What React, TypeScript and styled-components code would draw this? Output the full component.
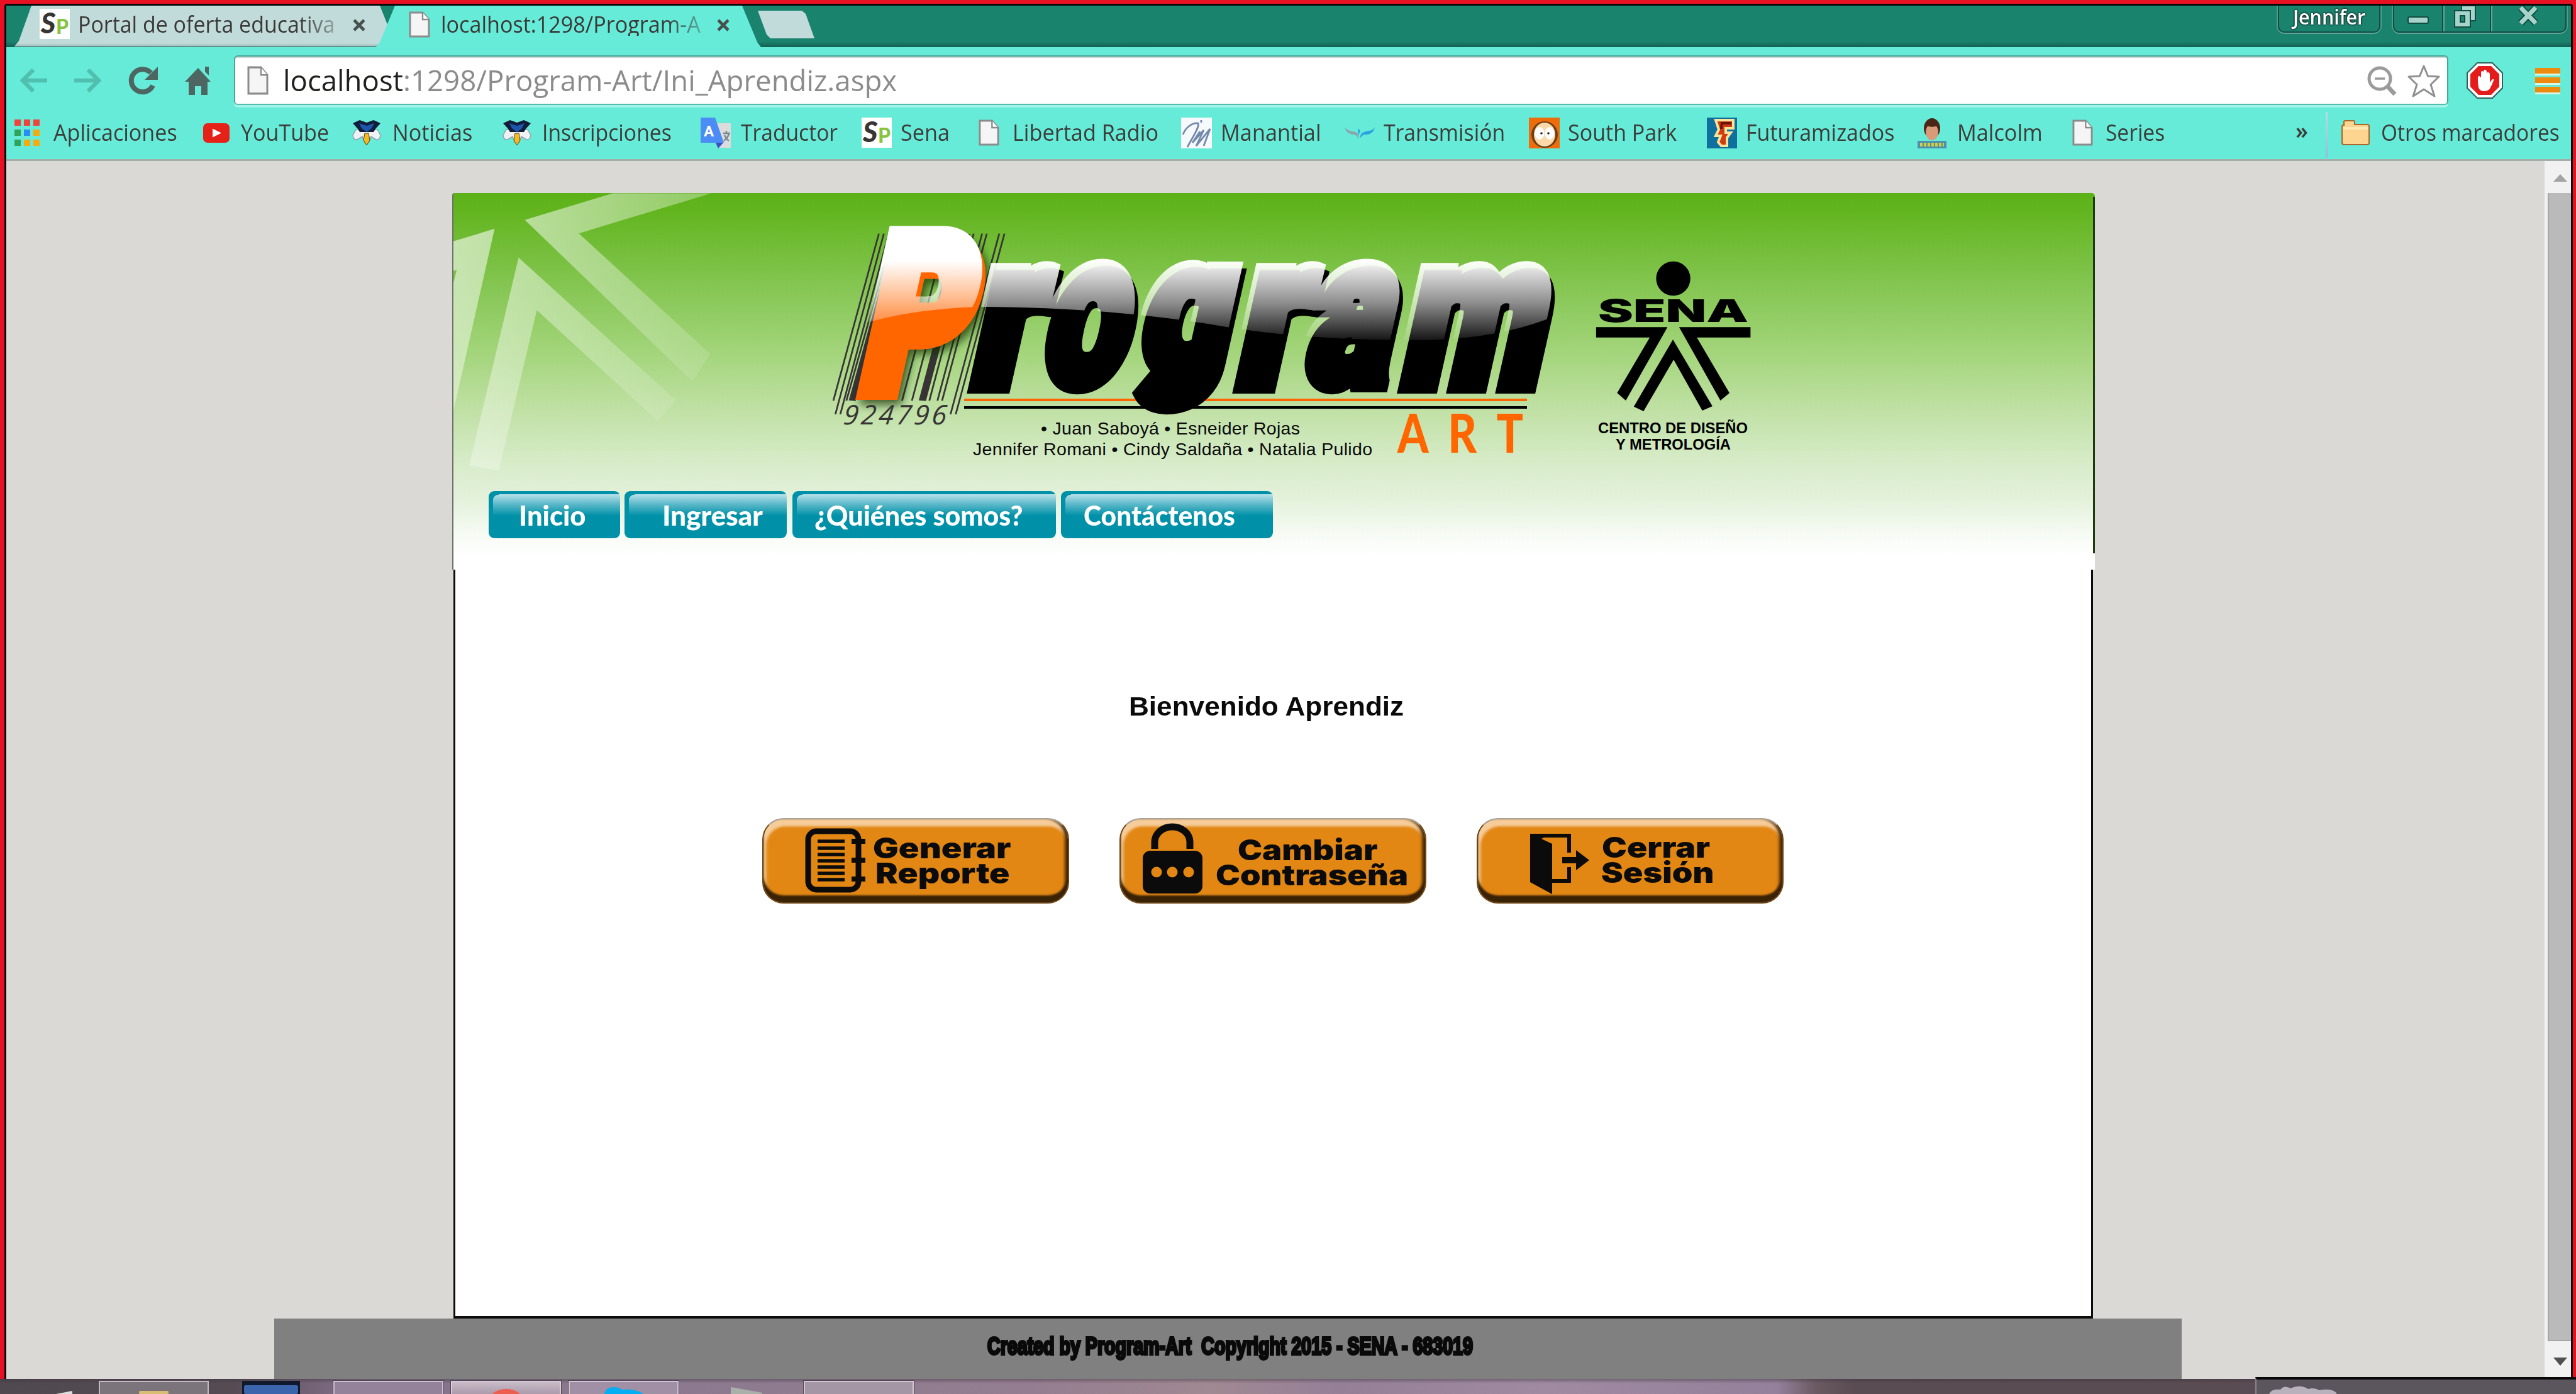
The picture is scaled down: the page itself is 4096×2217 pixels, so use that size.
import React, { useLayoutEffect, useRef, useState } from "react";
import styled, { createGlobalStyle, css } from "styled-components";

const ui = `"Open Sans", "Noto Sans", sans-serif`;
const teal = "#66ebd9";
const ink = "#3c3c38";

const GlobalStyle = createGlobalStyle`
  * { box-sizing: border-box; }
  html, body { margin: 0; background: #dbd9d5; overflow: hidden; }
  svg { display: block; flex: none; overflow: visible; }
`;

/* ---------- text that is condensed or widened to a given width ---------- */

const FitBox = styled.span<{ $w: number }>`
  display: block;
  flex: none;
  width: ${(p) => p.$w}px;
  white-space: pre;
`;
const FitInner = styled.span`
  display: inline-block;
  vertical-align: top;
  transform-origin: 0 50%;
`;
function Fit({ w, children }: { w: number; children: React.ReactNode }) {
  const ref = useRef<HTMLSpanElement>(null);
  const [scale, setScale] = useState(1);
  useLayoutEffect(() => {
    if (ref.current) setScale(w / ref.current.offsetWidth);
  }, [w]);
  return (
    <FitBox $w={w}>
      <FitInner ref={ref} style={{ transform: `scaleX(${scale})` }}>
        {children}
      </FitInner>
    </FitBox>
  );
}

/* ---------- window ---------- */

const Window = styled.div`
  width: 4096px;
  height: 2217px;
  display: flex;
  flex-direction: column;
  background: #e81123;
  overflow: hidden;
`;
const Frame = styled.div`
  margin: 6px 5px 0 7px;
  border: solid #0a0a0a;
  border-width: 3px 3px 0 3px;
  height: 2187px;
  flex: none;
  display: flex;
  flex-direction: column;
  border-radius: 4px 4px 0 0;
  overflow: hidden;
`;

/* ---------- tab strip ---------- */

const TabStrip = styled.div`
  height: 66px;
  flex: none;
  display: flex;
  justify-content: space-between;
  background: linear-gradient(#1a836e 86%, #125f52);
`;
const Tabs = styled.div`
  display: flex;
`;
const Tab = styled.div<{ $active?: boolean }>`
  width: ${(p) => (p.$active ? 612 : 602)}px;
  margin-left: ${(p) => (p.$active ? -26 : 12)}px;
  height: ${(p) => (p.$active ? 66 : 65)}px;
  padding: 5px 0 0 ${(p) => (p.$active ? 52 : 41)}px;
  display: flex;
  align-items: flex-start;
  background: ${(p) => (p.$active ? teal : "linear-gradient(#c1dbdb 92%, #9fb9b7)")};
  clip-path: ${(p) =>
    p.$active
      ? "polygon(30px 0, 582px 0, 606px 58px, 612px 66px, 0 66px, 6px 58px)"
      : "polygon(28px 0, 582px 0, 602px 50px, 576px 66px, 0 66px, 8px 56px)"};
  font: 36px/1 ${ui};
  color: #3a3936;
`;
const TabTitle = styled.div<{ $ml: number }>`
  margin: 7px 0 0 ${(p) => p.$ml}px;
  mask-image: linear-gradient(90deg, #000 86%, rgba(0, 0, 0, 0.35));
`;
const CloseMark = styled.svg<{ $ml: number }>`
  margin: 16px 0 0 ${(p) => p.$ml}px;
`;
const NewTab = styled.div`
  width: 90px;
  height: 44px;
  margin: 8px 0 0 -5px;
  background: #c1dbdb;
  clip-path: polygon(0 0, 70px 0, 76px 5px, 90px 44px, 20px 44px, 14px 38px);
`;
const Controls = styled.div`
  display: flex;
  gap: 20px;
  margin-right: 7px;
`;
const glassEdge = css`
  height: 43px;
  border: solid #0f4c41;
  border-width: 0 2px 2px 2px;
  border-radius: 0 0 10px 10px;
  box-shadow: 0 2px 0 #5fa898, -2px 0 0 #4f9c8c, 2px 0 0 #4f9c8c;
`;
const UserBadge = styled.div`
  ${glassEdge}
  width: 163px;
  padding: 1px 0 0 22px;
  font: 600 33px/1 ${ui};
  color: #fff;
  text-shadow: 0 0 3px #111, 0 0 3px #111;
`;
const WindowButtons = styled.div`
  ${glassEdge}
  width: 276px;
  display: flex;
`;
const WindowButton = styled.div<{ $w: number }>`
  width: ${(p) => p.$w}px;
  display: flex;
  justify-content: center;
  & + & {
    border-left: 2px solid #0f4c41;
    box-shadow: inset 2px 0 0 #5fa898;
  }
`;

/* ---------- toolbar ---------- */

const Toolbar = styled.div`
  height: 103px;
  flex: none;
  display: flex;
  align-items: flex-start;
  padding: 13px 16px 0 20px;
  background: ${teal};
`;
const ToolIcon = styled.svg<{ $ml?: number; $mt?: number }>`
  margin: ${(p) => p.$mt ?? 17}px 0 0 ${(p) => p.$ml ?? 0}px;
`;
const Omnibox = styled.div`
  width: 3521px;
  height: 79px;
  margin-left: 36px;
  padding: 15px 10px 0 19px;
  display: flex;
  align-items: flex-start;
  background: #fff;
  border: 2px solid #4aa596;
  border-bottom-color: #4fbfae;
  border-radius: 6px;
  box-shadow: 0 4px 0 #a3f3e8, inset 0 2px 1px #c9d6d4;
`;
const Url = styled.div`
  margin: 0 auto 0 23px;
  font: 45.5px/1 ${ui};
  color: #8b8b8b;
  b { font-weight: 400; color: #22201e; }
`;

/* ---------- bookmarks ---------- */

const Bookmarks = styled.div`
  height: 78px;
  flex: none;
  display: flex;
  background: ${teal};
  border-bottom: 3px solid #a2aeaa;
  font: 36px/1 ${ui};
  color: ${ink};
`;
const Bookmark = styled.div<{ $ml: number; $gap: number }>`
  display: flex;
  align-items: center;
  height: 66px;
  margin-left: ${(p) => p.$ml}px;
  gap: ${(p) => p.$gap}px;
`;
const More = styled.div`
  width: 22px;
  margin: 12px 26px 0 auto;
  font: 600 36px/1 ${ui};
`;
const Divider = styled.div`
  width: 3px;
  height: 73px;
  background: linear-gradient(#b8dfe0, #9db6dc);
`;
const OtherBookmarks = styled(Bookmark)`
  margin-right: 18px;
`;

/* ---------- page ---------- */

const Viewport = styled.div`
  flex: 1;
  min-height: 0;
  display: flex;
  background: #dbd9d5;
`;
const Page = styled.div`
  width: 4036px;
  flex: none;
  padding-top: 51px;
`;
const Header = styled.header`
  width: 2612px;
  height: 599px;
  margin-left: 709px;
  display: flex;
  flex-direction: column;
  border-left: 2px solid #6d706b;
  border-radius: 4px 5px 0 0;
  background:
    linear-gradient(#1d3a0c, #1d3a0c) 100% 6px / 3px 567px no-repeat,
    linear-gradient(#5bb118 0, #63b520 5%, #85c653 25%, #a6d67f 44%, #bfe0a3 57%, #d8ecca 72%, #e3f1da 81%, #f5faf2 90%, #fff 96%);
`;
const Nav = styled.nav`
  display: flex;
  margin-left: 56px;
`;
const NavButton = styled.a<{ $w: number; $pl: number; $mr: number }>`
  width: ${(p) => p.$w}px;
  height: 75px;
  margin-right: ${(p) => p.$mr}px;
  padding: 16px 0 0 ${(p) => p.$pl}px;
  border-radius: 9px;
  background:
    radial-gradient(circle at 100% 100%, transparent 9px, #0091a8 9.5px) 6px 5px / 10px 10px no-repeat,
    linear-gradient(#b8e1e9, #5fbaca 45%, #0091a8) 7px 5px / 100% 34px no-repeat,
    #0091a8;
  font: 900 44px/1 Lato, sans-serif;
  color: #fff;
`;
const Body = styled.main`
  width: 2607px;
  height: 1191px;
  margin-left: 711px;
  background: #fff;
  border: solid #0c0c0c;
  border-width: 0 3px 4px 3px;
`;
const Welcome = styled.h1`
  margin: 0 0 0 1071px;
  padding-top: 197px;
  font: 700 42px/1 "Liberation Sans", Arial, sans-serif;
  color: #0a0a0a;
`;
const Actions = styled.div`
  display: flex;
  gap: 80px;
  margin: 156px 0 0 488px;
`;
const ActionButton = styled.button<{ $pl: number }>`
  width: 488px;
  height: 136px;
  padding: 0 0 0 ${(p) => p.$pl}px;
  display: flex;
  align-items: flex-start;
  border: 2px solid #6b4414;
  border-top-color: #a8a19a;
  border-radius: 34px;
  background: #e28714;
  box-shadow: inset 0 -11px 3px #3a2206, inset -5px -2px 4px #4a2b08, inset 4px 10px 4px #f5cc9a, inset 0 10px 4px #f5cc9a;
  color: #0b0b0b;
  text-align: left;
`;
const ActionText = styled.div<{ $ml: number; $mt: number; $indent: number }>`
  margin: ${(p) => p.$mt}px 0 0 ${(p) => p.$ml}px;
  display: grid;
  font: 900 45px/40px Inter, sans-serif;
  & > :first-child { margin-left: ${(p) => p.$indent}px; }
`;
const Footer = styled.footer`
  width: 3033px;
  height: 97px;
  margin-left: 426px;
  padding: 24px 0 0 1134px;
  background: #808080;
  font: 700 39px/1 "Liberation Sans Narrow", "Liberation Sans", sans-serif;
  -webkit-text-stroke: 4px #0a0a0a;
  color: #0a0a0a;
`;
const Scrollbar = styled.div`
  flex: 1;
  display: flex;
  flex-direction: column;
  align-items: flex-end;
  background: #f1f1f1;
`;
const Thumb = styled.div`
  width: 37px;
  height: 1826px;
  background: #bababa;
  border-left: 2px solid #a5a5a5;
  border-bottom: 2px solid #a5a5a5;
`;
const ScrollArrow = styled.svg<{ $mt: number; $mb: number }>`
  margin: ${(p) => p.$mt}px 6px ${(p) => p.$mb}px 0;
`;

/* ---------- taskbar ---------- */

const Taskbar = styled.div`
  height: 24px;
  flex: none;
  display: flex;
  align-items: flex-end;
  padding-left: 9px;
  background:
    linear-gradient(rgba(60, 50, 60, 0.45), transparent 7px),
    linear-gradient(90deg, #504950 0, #554b53 9%, #6a5b6b 11%, #85718a 14%, #8f7b90 30%, #947d90 40%, #a08992 47%, #957f97 52%, #a08aa2 60%, #94809a 69%, #6a5a62 70.5%, #5a4c53 72%, #5a4c53);
`;
const Task = styled.div<{ $ml: number; $bg: string; $w?: number; $bare?: boolean }>`
  width: ${(p) => p.$w ?? 175}px;
  height: 21px;
  margin-left: ${(p) => p.$ml}px;
  display: flex;
  align-items: flex-end;
  justify-content: center;
  background: ${(p) => p.$bg};
  ${(p) => !p.$bare && css`
    border: 2px solid rgba(235, 225, 235, 0.65);
    border-bottom: 0;
    outline: 1px solid #4c4450;
  `}
`;
const StartOrb = styled.svg`
  margin-left: 80px;
`;
const Tray = styled.div`
  width: 510px;
  height: 27px;
  margin-left: auto;
  padding-left: 20px;
  display: flex;
  align-items: flex-end;
  background: #5b565d;
  border-top: 4px solid #080808;
  border-left: 2px solid #8a838c;
`;

/* ---------- icons ---------- */

const Close = ({ ml }: { ml: number }) => (
  <CloseMark $ml={ml} width="22" height="20" viewBox="0 0 22 20">
    <path d="M3 2 19 18M19 2 3 18" stroke="#45504d" strokeWidth="4.6" />
  </CloseMark>
);
const Doc = ({ w = 34, h = 42 }: { w?: number; h?: number }) => (
  <svg width={w} height={h} viewBox="0 0 34 42" preserveAspectRatio="none">
    <path d="M2 2h20l10 11v27H2z" fill="#f5f5f5" stroke="#8b8b8b" strokeWidth="3" />
    <path d="M22 2v11h10" fill="#fff" stroke="#8b8b8b" strokeWidth="2.4" />
  </svg>
);
const SpIcon = () => (
  <svg width="48" height="48" viewBox="0 0 48 48">
    <rect width="48" height="48" fill="#fff" />
    <text x="2" y="39" fontFamily="Lato" fontWeight="900" fontSize="45" fontStyle="italic" fill="#383431">S</text>
    <text x="26" y="40" fontFamily="Lato" fontWeight="900" fontSize="32" fill="#86c440">P</text>
  </svg>
);
const AppsIcon = () => (
  <svg width="40" height="43" viewBox="0 0 40 43">
    {["#f0433a", "#f0433a", "#f0433a", "#2fa35a", "#2a8bf2", "#f5ab0f", "#2fa35a", "#f5ab0f", "#f5ab0f"].map((c, i) => (
      <rect key={i} x={(i % 3) * 15} y={Math.floor(i / 3) * 16} width="10" height="10" fill={c} />
    ))}
  </svg>
);
const YouTubeIcon = () => (
  <svg width="42" height="31" viewBox="0 0 42 31">
    <rect width="42" height="31" rx="7" fill="#e62117" />
    <path d="M15 8.500 29 15.500 15 22.500z" fill="#fff" />
  </svg>
);
const GradIcon = () => (
  <svg width="46" height="42" viewBox="0 0 46 42">
    <path d="M6 16 1 25q1 8 7 7l8-5 4 10h6l4-10 8 5q6 1 7-7l-5-9z" fill="#eef2f5" stroke="#8fa3ad" strokeWidth="1.500" />
    <path d="M1 6 12 1l11 4L34 1l11 5-8 9-3 5H12L9 15z" fill="#101c38" />
    <path d="M11 6l12 4 12-4-4 8-8 6-8-6z" fill="#1d57ad" />
    <path d="M20 22h6l2 11-5 8-5-8z" fill="#f5b921" stroke="#5c4310" />
  </svg>
);
const TranslateIcon = () => (
  <svg width="49" height="49" viewBox="0 0 49 49">
    <path d="M18 9h30v39H28z" fill="#dcdcdc" />
    <path d="M0 0h23l14 40H0z" fill="#4c8cf5" />
    <path d="M24 40h12l-8 9z" fill="#3b4fc4" />
    <path d="M36 25h11M41 21v4m4 0c-1 6-4 9-8 12m1-9c2 4 4 7 7 9" stroke="#7b868d" strokeWidth="2.400" fill="none" />
    <text x="5" y="30" fontFamily="Roboto" fontWeight="700" fontSize="24" fill="#fff">A</text>
  </svg>
);
const ManantialIcon = () => (
  <svg width="49" height="49" viewBox="0 0 49 49">
    <rect width="49" height="49" fill="#f7fafc" />
    <path d="M3 27C7 16 17 8 27 9c3 6-10 24-17 38M30 22 18 40 36 20 24 45 46 18 36 45M32 4v4" stroke="#7289ab" strokeWidth="2.800" fill="none" />
  </svg>
);
const BirdIcon = () => (
  <svg width="48" height="20" viewBox="0 0 48 20">
    <path d="M0 1c4 7 10 5 20 9 2 2 2 6 2 10-3-6-5-7-9-7C6 12 1 8 0 1z" fill="#86a9ad" />
    <path d="M48 1c-3 7-9 5-17 8-4 1-6 5-7 10l6-6c9 1 17-3 18-12z" fill="#27a3e0" />
    <path d="m21 3 4 4-3 7z" fill="#27a3e0" />
  </svg>
);
const SouthIcon = () => (
  <svg width="49" height="49" viewBox="0 0 49 49">
    <rect width="49" height="49" fill="#ef6c0a" />
    <circle cx="25" cy="27" r="21" fill="#6b3d1a" />
    <ellipse cx="25" cy="27" rx="17" ry="19" fill="#fbd9a8" />
    <ellipse cx="17" cy="25" rx="7.500" ry="10" fill="#fff" />
    <ellipse cx="33" cy="25" rx="7.500" ry="10" fill="#fff" />
    <circle cx="20" cy="25" r="1.800" fill="#222" />
    <circle cx="31" cy="25" r="1.800" fill="#222" />
  </svg>
);
const FuturamaIcon = () => (
  <svg width="48" height="49" viewBox="0 0 48 49">
    <rect width="48" height="49" fill="#0f6f9d" />
    <path d="M14 4h28v13H30v7h8l-6 8v13h-9l-5-6 4-10h-8l5-10z" fill="#d23a12" stroke="#f6e59a" strokeWidth="4" />
    <path d="M22 7h17v4H25v7h-4z" fill="#6a130b" />
  </svg>
);
const MalcolmIcon = () => (
  <svg width="46" height="49" viewBox="0 0 46 49">
    <ellipse cx="23" cy="17" rx="13" ry="16" fill="#4b2617" />
    <ellipse cx="23" cy="23" rx="10" ry="13" fill="#d99a78" />
    <path d="M13 12c5-6 15-6 20 0-4 3-14 4-20 0z" fill="#4b2617" />
    <rect y="37" width="46" height="12" fill="#4d90ad" />
    <path d="M4 43h38" stroke="#d2cf3f" strokeWidth="6" strokeDasharray="4 2" />
  </svg>
);
const FolderIcon = () => (
  <svg width="45" height="40" viewBox="0 0 45 40">
    <path d="M4 8V3q0-2 2-2h13q2 0 2 2v4h20q3 0 3 3v26q0 3-3 3H4q-3 0-3-3V10q0-2 3-2z" fill="#fdd591" stroke="#a8682c" strokeWidth="2" />
    <path d="M3 11h39v4H3z" fill="#fff1c4" opacity=".7" />
  </svg>
);

const Notebook = () => (
  <ToolIcon $mt={13} width="97" height="105" viewBox="0 0 97 105">
    <rect x="5" y="6" width="80" height="93" rx="13" fill="none" stroke="#0b0b0b" strokeWidth="9" />
    <path d="M20 22h43M20 33h43M20 43h43M20 53h43M20 63h43M20 73h43M20 83h43" stroke="#0b0b0b" strokeWidth="5.500" />
    <path d="M74 22h22M74 52h22M74 82h22" stroke="#0b0b0b" strokeWidth="8" />
  </ToolIcon>
);
const Lock = () => (
  <ToolIcon $mt={7} width="97" height="112" viewBox="0 0 97 112">
    <path d="M20 40V29a28 24 0 0 1 56 0v11" fill="none" stroke="#0b0b0b" strokeWidth="11" />
    <rect x="1" y="43" width="95" height="68" rx="12" fill="#0b0b0b" />
    <g fill="#e28714">
      <circle cx="23" cy="77" r="8.500" />
      <circle cx="48" cy="77" r="8.500" />
      <circle cx="74" cy="77" r="8.500" />
    </g>
  </ToolIcon>
);
const Door = () => (
  <ToolIcon $mt={22} width="95" height="97" viewBox="0 0 95 97">
    <path d="M0 1h34L18 9l17 8v80L0 78z" fill="#0b0b0b" />
    <path d="M18 4h44v27M62 54v22H35" fill="none" stroke="#0b0b0b" strokeWidth="6" />
    <path d="M51 38h22V27l21 16-21 16V48H51z" fill="#0b0b0b" />
  </ToolIcon>
);

/* ---------- header artwork ---------- */

const bars = [
  [240, 83, 1117, 6], [257, 90, 1193, 6], [274, 107, 1193, 6], [290, 128, 1117, 6], [308, 148, 1117, 24],
  [473, 320, 1117, 6], [507, 354, 1117, 6], [543, 390, 1117, 25], [567, 414, 1117, 6],
  [596, 442, 1117, 6], [612, 458, 1117, 6], [655, 487, 1193, 6], [673, 505, 1193, 6],
];
const arial = "Liberation Sans, Arial, sans-serif";

/* letter, left edge, baseline, size, advance */
const letters: [string, number, number, number, number][] = [
  ["r", 1538, 613, 323, 105],
  ["o", 1650, 611, 326, 133],
  ["g", 1807, 588, 280, 140],
  ["r", 1960, 613, 323, 105],
  ["a", 2070, 611, 326, 134],
  ["m", 2222, 613, 323, 224],
];
const Wordmark = ({ color, dx = 0, dy = 0, hidden }: { color: string; dx?: number; dy?: number; hidden?: boolean }) => (
  <g fontFamily="Roboto, sans-serif" fontWeight="900" fill={color} stroke={color} strokeWidth="26" aria-hidden={hidden}>
    {letters.map(([ch, x, y, size, adv], i) => (
      <text key={i} transform={`translate(${x + dx} ${y + dy}) skewX(-12.6)`} fontSize={size} textLength={adv} lengthAdjust="spacingAndGlyphs">
        {ch}
      </text>
    ))}
  </g>
);
const BigP = ({ color, x, y, hidden }: { color: string; x: number; y: number; hidden?: boolean }) => (
  <text aria-hidden={hidden} transform={`translate(${x} ${y}) skewX(-12.6)`} fontFamily="Roboto, sans-serif" fontWeight="900" fontSize="333" textLength="166" lengthAdjust="spacingAndGlyphs" fill={color} stroke={color} strokeWidth="30">
    P
  </text>
);

const Banner = () => (
  <svg width="2608" height="474" viewBox="721 307 2608 474">
    <defs>
      <linearGradient id="ray" gradientUnits="userSpaceOnUse" x1="50" y1="100" x2="1000" y2="1000">
        <stop offset="0" stopColor="#fff" stopOpacity=".64" />
        <stop offset="1" stopColor="#fff" stopOpacity=".02" />
      </linearGradient>
      <linearGradient id="shineP" gradientUnits="userSpaceOnUse" x1="0" y1="415" x2="0" y2="515">
        <stop offset="0" stopColor="#fff" />
        <stop offset="1" stopColor="#fff" stopOpacity=".25" />
      </linearGradient>
      <linearGradient id="shine" gradientUnits="userSpaceOnUse" x1="0" y1="413" x2="0" y2="552">
        <stop offset="0" stopColor="#fff" />
        <stop offset=".15" stopColor="#fff" stopOpacity=".85" />
        <stop offset=".5" stopColor="#fff" stopOpacity=".55" />
        <stop offset="1" stopColor="#fff" stopOpacity="0" />
      </linearGradient>
      <mask id="maskP" maskUnits="userSpaceOnUse" x="1300" y="320" width="320" height="340">
        <path d="M1300 320H1600V487Q1470 487 1375 514L1300 540Z" fill="url(#shineP)" />
      </mask>
      <mask id="maskWord" maskUnits="userSpaceOnUse" x="1480" y="380" width="1040" height="300">
        <path d="M1500 380H2500V490Q2400 541 2250 541Q2080 541 1950 520Q1750 485 1500 488Z" fill="url(#shine)" />
      </mask>
      <filter id="drop" x="-20%" y="-20%" width="150%" height="150%">
        <feDropShadow dx="6" dy="8" stdDeviation="7" floodColor="#102800" floodOpacity=".7" />
      </filter>
    </defs>

    <g transform="translate(708.400 289.200) scale(.4149 .4057)" fill="url(#ray)">
      <path d="M304 149 640 45H1018L511 202 1014 674 947 783Z" />
      <path d="M91 1112 280 297 885 858 812 936 350 503 204 1132Z" />
      <path d="M30 233 188 184 30 900V398L43 346 30 348Z" />
    </g>

    <g transform="translate(1286.800 318) scale(.4611 .2858)" stroke="#383435">
      {bars.map(([t, b, y, w]) => (
        <path key={t} d={`M${t} 188 ${b} ${y}`} strokeWidth={w} />
      ))}
    </g>
    <path d="M1533 636H2428" stroke="#f60" strokeWidth="4" />
    <path d="M1533 648H2428" stroke="#000" strokeWidth="4" />

    <g filter="url(#drop)">
      <BigP color="#f60" x={1361} y={621} />
    </g>
    <g mask="url(#maskP)">
      <BigP color="#fff" x={1356} y={611} hidden />
    </g>
    <Wordmark color="#000" />
    <g mask="url(#maskWord)">
      <Wordmark color="#fff" dx={-5.500} dy={-11} hidden />
    </g>

    <text transform="translate(1340 675) skewX(-6)" fontFamily="Open Sans" fontStyle="italic" fontSize="43" textLength="164" fill="#383435">924796</text>
    <g fontFamily={arial} fontSize="28.500" fill="#0a0a0a">
      <text x="1655" y="691" textLength="412">• Juan Saboyá • Esneider Rojas</text>
      <text x="1547" y="724" textLength="635">Jennifer Romani • Cindy Saldaña • Natalia Pulido</text>
    </g>
    <g transform="translate(2222 720) scale(.82 1)" fontFamily="Lato" fontWeight="900" fontSize="86" fill="#f60">
      <text x="0 98 192" y="0">ART</text>
    </g>

    <circle cx="2660.600" cy="443" r="27.200" />
    <text x="2541" y="512" fontFamily="Inter" fontWeight="900" fontSize="49" textLength="239" lengthAdjust="spacingAndGlyphs">SENA</text>
    <g transform="translate(1951.800 318) scale(.5763 .2858)">
      <path d="M1017 708H1214L1099 1116 1075 1074 1165 765H1017Z" />
      <path d="M1246 708H1443V765H1295L1385 1074 1360 1116Z" />
      <path d="M1229 777 1338 1148 1310 1172 1231 889 1148 1176 1121 1150Z" />
    </g>
    <g fontFamily={arial} fontWeight="700" fontSize="24.500">
      <text x="2541" y="689" textLength="238" lengthAdjust="spacingAndGlyphs">CENTRO DE DISEÑO</text>
      <text x="2569" y="715" textLength="183" lengthAdjust="spacingAndGlyphs">Y METROLOGÍA</text>
    </g>
  </svg>
);

const bookmarks = [
  { icon: <AppsIcon />, ml: 13, gap: 22, w: 197, label: "Aplicaciones" },
  { icon: <YouTubeIcon />, ml: 41, gap: 18, w: 140, label: "YouTube" },
  { icon: <GradIcon />, ml: 37, gap: 18, w: 127, label: "Noticias" },
  { icon: <GradIcon />, ml: 48, gap: 17, w: 206, label: "Inscripciones" },
  { icon: <TranslateIcon />, ml: 46, gap: 15, w: 154, label: "Traductor" },
  { icon: <SpIcon />, ml: 38, gap: 14, w: 78, label: "Sena" },
  { icon: <Doc w={33} />, ml: 46, gap: 21, w: 232, label: "Libertad Radio" },
  { icon: <ManantialIcon />, ml: 36, gap: 14, w: 160, label: "Manantial" },
  { icon: <BirdIcon />, ml: 37, gap: 14, w: 193, label: "Transmisión" },
  { icon: <SouthIcon />, ml: 38, gap: 13, w: 173, label: "South Park" },
  { icon: <FuturamaIcon />, ml: 48, gap: 14, w: 236, label: "Futuramizados" },
  { icon: <MalcolmIcon />, ml: 37, gap: 17, w: 136, label: "Malcolm" },
  { icon: <Doc w={33} />, ml: 47, gap: 20, w: 94, label: "Series" },
];

export default function App() {
  return (
    <Window>
      <GlobalStyle />
      <Frame>
        <TabStrip>
          <Tabs>
            <Tab>
              <SpIcon />
              <TabTitle $ml={13}><Fit w={408}>Portal de oferta educativa</Fit></TabTitle>
              <Close ml={28} />
            </Tab>
            <Tab $active>
              <ToolIcon as="div" $mt={4}><Doc /></ToolIcon>
              <TabTitle $ml={17}><Fit w={413}>localhost:1298/Program-A</Fit></TabTitle>
              <Close ml={25} />
            </Tab>
            <NewTab />
          </Tabs>
          <Controls>
            <UserBadge><Fit w={115}>Jennifer</Fit></UserBadge>
            <WindowButtons>
              <WindowButton $w={76}>
                <svg width="36" height="32" viewBox="0 0 36 32">
                  <rect x="2" y="18" width="32" height="10" rx="2" fill="#a6d3ca" stroke="#0f4c41" strokeWidth="2" />
                </svg>
              </WindowButton>
              <WindowButton $w={76}>
                <svg width="40" height="38" viewBox="0 0 40 38">
                  <path d="M12 0h22v24h-8V8H12z" fill="#a6d3ca" stroke="#0f4c41" strokeWidth="2" />
                  <path d="M1 8h25v26H1zM10 16v10h7V16z" fillRule="evenodd" fill="#a6d3ca" stroke="#0f4c41" strokeWidth="2" />
                </svg>
              </WindowButton>
              <WindowButton $w={120}>
                <svg width="34" height="32" viewBox="0 0 34 32">
                  <path d="M5 3 29 28M29 3 5 28" stroke="#0f4c41" strokeWidth="11" />
                  <path d="M5 3 29 28M29 3 5 28" stroke="#a6d3ca" strokeWidth="7" />
                </svg>
              </WindowButton>
            </WindowButtons>
          </Controls>
        </TabStrip>

        <Toolbar>
          <ToolIcon width="46" height="44" viewBox="0 0 46 44" $mt={19}>
            <path d="M45 21H7M23 4 6 21l17 17" fill="none" stroke="#50bfae" strokeWidth="6.500" />
          </ToolIcon>
          <ToolIcon width="46" height="44" viewBox="0 0 46 44" $mt={19} $ml={41}>
            <path d="M1 21h38M23 4l17 17-17 17" fill="none" stroke="#50bfae" strokeWidth="6.500" />
          </ToolIcon>
          <ToolIcon width="47" height="47" viewBox="0 0 47 47" $ml={42}>
            <path d="M38 31A18 18 0 1 1 35 11" fill="none" stroke="#4e6661" strokeWidth="8" />
            <path d="M46 1v21H25z" fill="#4e6661" />
          </ToolIcon>
          <ToolIcon width="42" height="47" viewBox="0 0 42 47" $ml={42}>
            <path d="M21 3 41 25h-5v21H26V32H16v14H6V25H0zM32 1h6v14l-6-6z" fill="#4e6661" />
          </ToolIcon>
          <Omnibox>
            <Doc h={46} />
            <Url><Fit w={976}><b>localhost</b>:1298/Program-Art/Ini_Aprendiz.aspx</Fit></Url>
            <svg width="47" height="47" viewBox="0 0 47 47">
              <circle cx="20" cy="20" r="17" fill="none" stroke="#9b9b9b" strokeWidth="5" />
              <path d="M12 20h16" stroke="#9b9b9b" strokeWidth="3.500" />
              <path d="m32 32 12 13" stroke="#9b9b9b" strokeWidth="7" />
            </svg>
            <ToolIcon width="54" height="54" viewBox="0 0 54 54" $mt={-3} $ml={16}>
              <path d="M27 3l6.500 16 17.500 1-13 12.500 6 18.500-17-11-17 11 6-18.500L3 20l17.500-1z" fill="#fff" stroke="#8f8f8f" strokeWidth="3" strokeLinejoin="round" />
            </ToolIcon>
          </Omnibox>
          <ToolIcon width="58" height="58" viewBox="0 0 58 58" $mt={11} $ml={29}>
            <path d="M17 1h24l16 16v24L41 57H17L1 41V17z" fill="#fff" stroke="#33605c" strokeWidth="2" />
            <path d="M19 6h20l13 13v20L39 52H19L6 39V19z" fill="#e51c1c" />
            <path d="M18 25q0-3 2-3t3 3v-8q0-3 2-3t2 3v-3q1-3 3-2t2 3v3q1-3 3-2t2 3v13l4-5q3-1 2 2-3 8-6 13-3 4-9 4-7 0-9-6-1-5-1-13z" fill="#fff" />
          </ToolIcon>
          <ToolIcon width="40" height="43" viewBox="0 0 40 43" $mt={20} $ml={51}>
            <g fill="#d9f7e9"><rect y="8" width="40" height="4" /><rect y="23" width="40" height="4" /><rect y="38" width="40" height="4" /></g>
            <g fill="#ee8a0e"><rect width="40" height="9" /><rect y="15" width="40" height="9" /><rect y="30" width="40" height="9" /></g>
          </ToolIcon>
        </Toolbar>

        <Bookmarks>
          {bookmarks.map((b) => (
            <Bookmark key={b.label} $ml={b.ml} $gap={b.gap}>
              {b.icon}
              <Fit w={b.w}>{b.label}</Fit>
            </Bookmark>
          ))}
          <More>»</More>
          <Divider />
          <OtherBookmarks $ml={22} $gap={18}>
            <FolderIcon />
            <Fit w={284}>Otros marcadores</Fit>
          </OtherBookmarks>
        </Bookmarks>

        <Viewport>
          <Page>
            <Header>
              <Banner />
              <Nav>
                <NavButton $w={209} $pl={48} $mr={7}><Fit w={107}>Inicio</Fit></NavButton>
                <NavButton $w={258} $pl={60} $mr={9}><Fit w={160}>Ingresar</Fit></NavButton>
                <NavButton $w={419} $pl={35} $mr={8}><Fit w={331}>¿Quiénes somos?</Fit></NavButton>
                <NavButton $w={337} $pl={36} $mr={0}><Fit w={241}>Contáctenos</Fit></NavButton>
              </Nav>
            </Header>
            <Body>
              <Welcome><Fit w={437}>Bienvenido Aprendiz</Fit></Welcome>
              <Actions>
                <ActionButton $pl={66}>
                  <Notebook />
                  <ActionText $ml={15} $mt={26} $indent={-4}>
                    <Fit w={219}>Generar</Fit>
                    <Fit w={213}>Reporte</Fit>
                  </ActionText>
                </ActionButton>
                <ActionButton $pl={34}>
                  <Lock />
                  <ActionText $ml={20} $mt={29} $indent={35}>
                    <Fit w={223}>Cambiar</Fit>
                    <Fit w={306}>Contraseña</Fit>
                  </ActionText>
                </ActionButton>
                <ActionButton $pl={83}>
                  <Door />
                  <ActionText $ml={18} $mt={25} $indent={1}>
                    <Fit w={172}>Cerrar</Fit>
                    <Fit w={179}>Sesión</Fit>
                  </ActionText>
                </ActionButton>
              </Actions>
            </Body>
            <Footer><Fit w={772}>{"Created by Program-Art  Copyright 2015 - SENA - 683019"}</Fit></Footer>
          </Page>
          <Scrollbar>
            <ScrollArrow $mt={21} $mb={18} width="22" height="12" viewBox="0 0 22 12"><path d="M11 0 22 12H0z" fill="#a3a3a3" /></ScrollArrow>
            <Thumb />
            <ScrollArrow $mt={26} $mb={0} width="22" height="13" viewBox="0 0 22 13"><path d="M11 13 22 0H0z" fill="#505050" /></ScrollArrow>
          </Scrollbar>
        </Viewport>
      </Frame>

      <Taskbar>
        <StartOrb width="26" height="5" viewBox="0 0 26 5"><path d="M0 5 26 0v5z" fill="#ddd" /></StartOrb>
        <Task $ml={42} $bg="#7b747b"><svg width="47" height="5"><rect width="47" height="5" rx="2" fill="#d8bd72" /></svg></Task>
        <Task $ml={53} $w={92} $bare $bg="#111a2c"><svg width="86" height="14"><rect width="86" height="14" rx="3" fill="#3b66ae" /></svg></Task>
        <Task $ml={53} $bg="#93829a" />
        <Task $ml={12} $bg="linear-gradient(#c9bbc8, #ac9bab)"><svg width="44" height="8" viewBox="0 0 44 8"><path d="M0 8Q8 0 22 0 36 0 44 8z" fill="#ec5f50" /></svg></Task>
        <Task $ml={12} $bg="#a08fa5"><svg width="62" height="11" viewBox="0 0 62 11"><path d="M0 11Q2 0 16 0 24 1 28 4 50 2 62 11z" fill="#05adf2" /></svg></Task>
        <Task $ml={83} $w={50} $bare $bg="transparent"><svg width="50" height="11" viewBox="0 0 50 11"><path d="M0 0 50 9v2H0z" fill="#a9b0a9" /></svg></Task>
        <Task $ml={66} $bg="#a596a6" />
        <Tray><svg width="108" height="13" viewBox="0 0 108 13"><path d="M0 13Q4 4 18 6 24-2 34 4 50-3 62 5 72 2 80 7 102 3 108 13z" fill="#b9b2bc" /></svg></Tray>
      </Taskbar>
    </Window>
  );
}
